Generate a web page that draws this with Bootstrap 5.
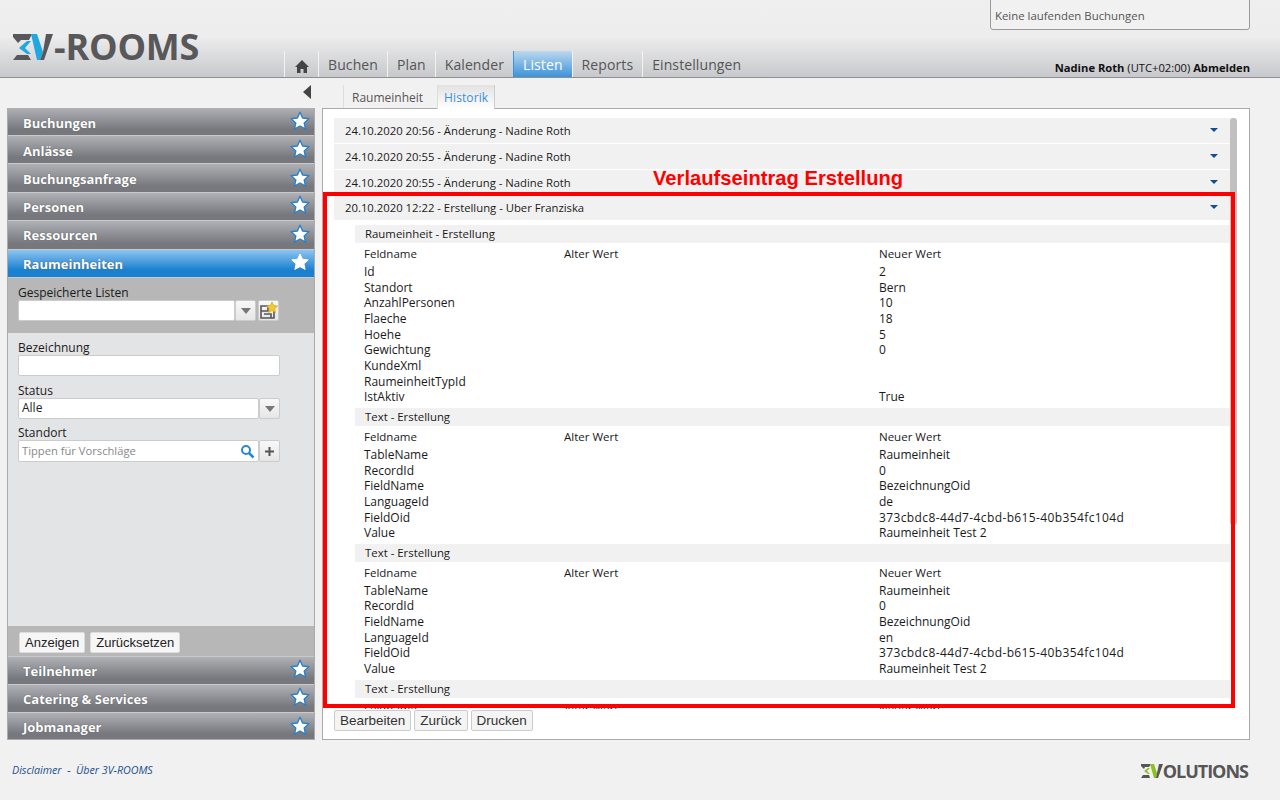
<!DOCTYPE html>
<html lang="de">
<head>
    <meta charset="UTF-8">
    <title>3V-ROOMS</title>
    <link href="https://cdn.jsdelivr.net/npm/bootstrap@5.3.0/dist/css/bootstrap.min.css" rel="stylesheet">
    <style>
        body { background: #f1f1f1; font-family: "Open Sans", "Noto Sans", sans-serif; font-size: 12px; color: #1a1a1a; height: 800px; overflow: hidden; line-height: 15.6px; }

        .top-head { height: 78px; background: linear-gradient(#efeff0 0, #ededee 36px, #c8c9cc 77px); border-bottom: 1px solid #8f8f8f; }
        .logo-wrap { left: 13px; top: 27px; }
        .logo-word { font-size: 36px; font-weight: 700; color: #58585a; line-height: 40px; letter-spacing: -.2px; margin-left: 1px; }
        .booking-box { left: 990px; top: -2px; width: 260px; height: 32px; background: #f1f1f1; border: 1px solid #999; border-radius: 0 0 3px 3px; padding: 9px 4px 0; color: #555; font-size: 11.4px; }
        .main-nav { left: 284px; top: 51px; height: 26px; }
        .main-nav a { display: block; height: 26px; padding: 4px 9px 0; border-left: 1px solid #f2f2f2; font-size: 14px; line-height: 20px; color: #555; text-decoration: none; letter-spacing: .1px; }
        .main-nav a.on { background: linear-gradient(#bcd8ef, #3b93da); color: #fff; border-left-color: #3b93da; }
        .user-line { right: 30px; top: 60px; color: #111; font-size: 11.2px; }

        .page-body { padding: 0 30px 0 7px; }
        .side-col { width: 308px; }
        .collapse-row { height: 30px; padding: 7px 4px 0 0; }
        .side-box { border: 1px solid #aaa; border-top: 0; height: 632px; }
        .side-head { height: 28px; background: linear-gradient(#b0b1b5, #76787e 80%, #76787e); border-bottom: 1px solid #c8c9cc; color: #fff; font-weight: 700; font-size: 13px; padding: 4px 0 0 15px; text-shadow: 0 0 1px #444; flex: none; }
        .side-head.on { background: linear-gradient(#8cc4f0, #1a80d0 75%); }
        .side-head.tall { height: 29px; }
        .side-head.low { padding-top: 2px; }
        .side-head.end { height: 26px; border-bottom: 0; }
        .side-head svg { margin-right: 4px; margin-top: -5px; }
        .saved-block { background: #b7b7b7; height: 55px; padding: 7px 10px 0; flex: none; }
        .filter-block { background: #e3e4e6; min-height: 0; padding: 7px 10px 0; }
        .filter-form { width: 262px; }
        .foot-block { background: #b7b7b7; height: 31px; padding: 6px 11px 0; border-bottom: 1px solid #c8c9cc; gap: 5px; flex: none; }
        .fld-label { display: block; margin: 0; line-height: 15px; }
        .filter-form .fld-label:not(:first-child) { margin-top: 7px; }
        .filter-form .fld-label.near { margin-top: 6px; }
        .fld { height: 21px; background: #fff; border: 1px solid #ccc; border-radius: 2px; padding: 0 3px; font-size: 12px; line-height: 18px; color: #222; }
        .fld-btn { width: 21px; height: 21px; background: linear-gradient(#f8f8f8, #e6e6e6); border: 1px solid #ccc; border-radius: 2px; flex: none; }
        .save-btn { margin-left: 2px; }
        .hint-text { color: #888; font-size: 11.2px; }
        .hint-row .fld, .hint-row .fld-btn { height: 22px; }
        .side-btn { font-family: "Liberation Sans", sans-serif; font-size: 13px; height: 21px; padding: 0 5px; line-height: 19px; background: #f6f6f6; border: 1px solid #ddd; border-radius: 2px; color: #222; }

        .main-col { width: 928px; margin-left: 7px; }
        .sub-tabs { height: 30px; padding: 7px 0 0 21px; }
        .sub-tabs a { display: block; height: 24px; padding: 5px 8px 0; text-decoration: none; color: #555; border-left: 1px solid #ddd; line-height: 15px; }
        .sub-tabs a.on { color: #3a8fd8; background: linear-gradient(#e2e2e2, #fff); border-right: 1px solid #ccc; border-left: 1px solid #ddd; margin-left: 6px; position: relative; z-index: 1; padding: 5px 6px 0; letter-spacing: .1px; }
        .main-box { background: #fff; border: 1px solid #aaa; height: 632px; padding: 9px 0 0 11px; }
        .scroll-area { height: 591px; width: 896px; overflow: hidden; }
        .hist-row { background: #f1f1f1; height: 24.8px; margin-bottom: 1px; padding: 5px 11px 0; font-size: 11.3px; }
        .hist-row i { width: 0; height: 0; border-left: 4.5px solid transparent; border-right: 4.5px solid transparent; border-top: 4px solid #0f4f8f; margin: 5px 1px 0 0; }
        .detail-pane { padding: 4px 0 0 21px; }
        .sect-head { background: #f1f1f1; height: 18px; padding: 1px 10px 0; margin-top: 3px; font-size: 11.4px; }
        .sect-head.first { margin-top: 0; }
        .val-row { height: 15.65px; padding-left: 9px; }
        .val-row.cap { height: 18px; margin-top: 3px; font-size: 11.5px; }
        .val-row span:nth-child(1) { width: 200px; }
        .val-row span:nth-child(2) { width: 315px; }
        .val-row .guid-val { letter-spacing: .38px; }
        .form-btns { margin-top: 1px; gap: 3px; }
        .form-btn { font-family: "Liberation Sans", sans-serif; font-size: 13.5px; height: 21px; padding: 0 5px; line-height: 18px; background: #f4f4f4; border: 1px solid #ccc; border-radius: 2px; color: #333; }
        .scroll-thumb { left: 907px; top: 9px; width: 7px; height: 407px; background: #c0c0c0; border-radius: 3px; }
        .red-frame { left: 0; top: 83px; width: 912px; height: 516px; border: 4px solid #f00; }
        .red-note { left: 330px; top: 56px; font-family: "Liberation Sans", sans-serif; font-weight: 700; font-size: 20.2px; line-height: 26px; color: #f00; white-space: nowrap; }

        .page-foot { padding: 22px 32px 0 12px; }
        .foot-links { font-size: 10.7px; font-style: italic; color: #1b4f8f; }
        .foot-links a { color: inherit; text-decoration: none; }
        .evo-word { font-size: 18px; font-weight: 700; color: #565656; line-height: 18px; letter-spacing: -1px; }
    </style>
</head>
<body>
    <svg width="0" height="0" class="position-absolute">
        <symbol id="star" viewBox="0 0 20 20"><polygon points="10,1.2 12.6,7 18.9,7.7 14.2,11.9 15.5,18.2 10,15 4.5,18.2 5.8,11.9 1.1,7.7 7.4,7" fill="#fff" stroke="#2a80c8" stroke-width="1.4" stroke-linejoin="round"/></symbol>
        <symbol id="starw" viewBox="0 0 20 20"><polygon points="10,2 12.4,7.2 18.2,7.9 13.9,11.8 15.1,17.4 10,14.6 4.9,17.4 6.1,11.8 1.8,7.9 7.6,7.2" fill="#fff" stroke="#fff" stroke-width="1" stroke-linejoin="round"/></symbol>
    </svg>

    <header class="top-head position-relative">
        <div class="logo-wrap position-absolute d-flex align-items-center">
            <svg width="40" height="27" viewBox="0 0 40 27">
                <polygon points="0,0 19,0 16,6 8,6 5,9 0,3" fill="#58585a"/>
                <polygon points="6,14 14,7 18,7 12,14 18,20 14,20" fill="#1fa9e3"/>
                <polygon points="0,26 4,21 15,21 18,26" fill="#58585a"/>
                <polygon points="18,0 24,0 30,18 27,26 24,26" fill="#1fa9e3"/>
                <polygon points="33,0 40,0 31,26 27,26 30,18" fill="#58585a"/>
            </svg>
            <span class="logo-word">-ROOMS</span>
        </div>
        <div class="booking-box position-absolute">Keine laufenden Buchungen</div>
        <nav class="main-nav position-absolute d-flex">
            <a href="#" style="width:34px"><svg width="16" height="15" viewBox="0 0 16 15"><path d="M8 1 L15 8 H13 V14 H9.5 V10 H6.5 V14 H3 V8 H1 Z" fill="#444"/></svg></a>
            <a href="#">Buchen</a>
            <a href="#">Plan</a>
            <a href="#">Kalender</a>
            <a href="#" class="on">Listen</a>
            <a href="#">Reports</a>
            <a href="#">Einstellungen</a>
        </nav>
        <div class="user-line position-absolute"><b>Nadine Roth</b> (UTC+02:00) <b>Abmelden</b></div>
    </header>

    <div class="page-body d-flex">
        <div class="side-col">
            <div class="collapse-row d-flex justify-content-end">
                <svg width="8" height="14" viewBox="0 0 8 14"><polygon points="8,0 8,14 0,7" fill="#444"/></svg>
            </div>
            <div class="side-box d-flex flex-column">
                <div class="side-head d-flex align-items-center justify-content-between">Buchungen<svg width="20" height="20"><use href="#star"/></svg></div>
                <div class="side-head d-flex align-items-center justify-content-between">Anlässe<svg width="20" height="20"><use href="#star"/></svg></div>
                <div class="side-head tall d-flex align-items-center justify-content-between">Buchungsanfrage<svg width="20" height="20"><use href="#star"/></svg></div>
                <div class="side-head low d-flex align-items-center justify-content-between">Personen<svg width="20" height="20"><use href="#star"/></svg></div>
                <div class="side-head tall low d-flex align-items-center justify-content-between">Ressourcen<svg width="20" height="20"><use href="#star"/></svg></div>
                <div class="side-head on low d-flex align-items-center justify-content-between">Raumeinheiten<svg width="20" height="20"><use href="#starw"/></svg></div>
                <div class="saved-block">
                    <label class="fld-label">Gespeicherte Listen</label>
                    <div class="d-flex">
                        <div class="fld" style="width:217px"></div>
                        <div class="fld-btn d-flex align-items-center justify-content-center"><svg width="10" height="6"><polygon points="0,0 10,0 5,6" fill="#777"/></svg></div>
                        <div class="fld-btn save-btn d-flex align-items-center justify-content-center"><svg width="19" height="19" viewBox="0 0 19 19"><path d="M2 5 H9 V10 H2 Z M2 10 V17 H15 V9 M5 13 H12 V17" fill="none" stroke="#555" stroke-width="1.6"/><polygon points="13,1 14.7,4.6 18.6,5 15.7,7.7 16.5,11.5 13,9.6 9.5,11.5 10.3,7.7 7.4,5 11.3,4.6" fill="#f5c92c" stroke="#c99a10" stroke-width=".6"/></svg></div>
                    </div>
                </div>
                <div class="filter-block flex-grow-1">
                    <div class="filter-form">
                        <label class="fld-label">Bezeichnung</label>
                        <div class="fld"></div>
                        <label class="fld-label">Status</label>
                        <div class="d-flex">
                            <div class="fld flex-grow-1">Alle</div>
                            <div class="fld-btn d-flex align-items-center justify-content-center"><svg width="10" height="6"><polygon points="0,0 10,0 5,6" fill="#777"/></svg></div>
                        </div>
                        <label class="fld-label near">Standort</label>
                        <div class="hint-row d-flex">
                            <div class="fld hint-text flex-grow-1 d-flex align-items-center justify-content-between">Tippen für Vorschläge
                                <svg width="15" height="15" viewBox="0 0 15 15"><circle cx="6" cy="6" r="4" fill="none" stroke="#2a86d0" stroke-width="2"/><line x1="9" y1="9" x2="13.5" y2="13.5" stroke="#2a86d0" stroke-width="2.5"/></svg>
                            </div>
                            <div class="fld-btn d-flex align-items-center justify-content-center"><svg width="9" height="9"><path d="M4.5 0 V9 M0 4.5 H9" stroke="#555" stroke-width="2"/></svg></div>
                        </div>
                    </div>
                </div>
                <div class="foot-block d-flex">
                    <button class="btn side-btn" type="button">Anzeigen</button>
                    <button class="btn side-btn" type="button">Zurücksetzen</button>
                </div>
                <div class="side-head low d-flex align-items-center justify-content-between">Teilnehmer<svg width="20" height="20"><use href="#star"/></svg></div>
                <div class="side-head low d-flex align-items-center justify-content-between">Catering &amp; Services<svg width="20" height="20"><use href="#star"/></svg></div>
                <div class="side-head end d-flex align-items-center justify-content-between">Jobmanager<svg width="20" height="20"><use href="#star"/></svg></div>
            </div>
        </div>

        <div class="main-col">
            <div class="sub-tabs d-flex">
                <a href="#">Raumeinheit</a>
                <a href="#" class="on">Historik</a>
            </div>
            <div class="main-box position-relative">
                <div class="scroll-area">
                    <div class="hist-row d-flex justify-content-between">24.10.2020 20:56 - Änderung - Nadine Roth<i></i></div>
                    <div class="hist-row d-flex justify-content-between">24.10.2020 20:55 - Änderung - Nadine Roth<i></i></div>
                    <div class="hist-row d-flex justify-content-between">24.10.2020 20:55 - Änderung - Nadine Roth<i></i></div>
                    <div class="hist-row d-flex justify-content-between">20.10.2020 12:22 - Erstellung - Uber Franziska<i></i></div>
                    <div class="detail-pane">
                        <div class="sect-head first">Raumeinheit - Erstellung</div>
                        <div class="val-row cap d-flex"><span>Feldname</span><span>Alter Wert</span><span>Neuer Wert</span></div>
                        <div class="val-row d-flex"><span>Id</span><span></span><span>2</span></div>
                        <div class="val-row d-flex"><span>Standort</span><span></span><span>Bern</span></div>
                        <div class="val-row d-flex"><span>AnzahlPersonen</span><span></span><span>10</span></div>
                        <div class="val-row d-flex"><span>Flaeche</span><span></span><span>18</span></div>
                        <div class="val-row d-flex"><span>Hoehe</span><span></span><span>5</span></div>
                        <div class="val-row d-flex"><span>Gewichtung</span><span></span><span>0</span></div>
                        <div class="val-row d-flex"><span>KundeXml</span><span></span><span></span></div>
                        <div class="val-row d-flex"><span>RaumeinheitTypId</span><span></span><span></span></div>
                        <div class="val-row d-flex"><span>IstAktiv</span><span></span><span>True</span></div>

                        <div class="sect-head">Text - Erstellung</div>
                        <div class="val-row cap d-flex"><span>Feldname</span><span>Alter Wert</span><span>Neuer Wert</span></div>
                        <div class="val-row d-flex"><span>TableName</span><span></span><span>Raumeinheit</span></div>
                        <div class="val-row d-flex"><span>RecordId</span><span></span><span>0</span></div>
                        <div class="val-row d-flex"><span>FieldName</span><span></span><span>BezeichnungOid</span></div>
                        <div class="val-row d-flex"><span>LanguageId</span><span></span><span>de</span></div>
                        <div class="val-row d-flex"><span>FieldOid</span><span></span><span class="guid-val">373cbdc8-44d7-4cbd-b615-40b354fc104d</span></div>
                        <div class="val-row d-flex"><span>Value</span><span></span><span>Raumeinheit Test 2</span></div>

                        <div class="sect-head">Text - Erstellung</div>
                        <div class="val-row cap d-flex"><span>Feldname</span><span>Alter Wert</span><span>Neuer Wert</span></div>
                        <div class="val-row d-flex"><span>TableName</span><span></span><span>Raumeinheit</span></div>
                        <div class="val-row d-flex"><span>RecordId</span><span></span><span>0</span></div>
                        <div class="val-row d-flex"><span>FieldName</span><span></span><span>BezeichnungOid</span></div>
                        <div class="val-row d-flex"><span>LanguageId</span><span></span><span>en</span></div>
                        <div class="val-row d-flex"><span>FieldOid</span><span></span><span class="guid-val">373cbdc8-44d7-4cbd-b615-40b354fc104d</span></div>
                        <div class="val-row d-flex"><span>Value</span><span></span><span>Raumeinheit Test 2</span></div>

                        <div class="sect-head">Text - Erstellung</div>
                        <div class="val-row cap d-flex"><span>Feldname</span><span>Alter Wert</span><span>Neuer Wert</span></div>
                    </div>
                </div>
                <div class="form-btns d-flex">
                    <button class="btn form-btn" type="button">Bearbeiten</button>
                    <button class="btn form-btn" type="button">Zurück</button>
                    <button class="btn form-btn" type="button">Drucken</button>
                </div>
                <div class="scroll-thumb position-absolute"></div>
                <div class="red-frame position-absolute"></div>
                <div class="red-note position-absolute">Verlaufseintrag Erstellung</div>
            </div>
        </div>
    </div>

    <footer class="page-foot d-flex justify-content-between align-items-center">
        <div class="foot-links"><a href="#">Disclaimer</a> &nbsp;-&nbsp; <a href="#">Über 3V-ROOMS</a></div>
        <div class="d-flex align-items-center">
            <svg width="22" height="14" viewBox="0 0 22 14">
                <polygon points="0,0 10,0 8,3 4,3 3,5 0,2" fill="#565656"/>
                <polygon points="3,7 7,4 9,4 6,7 9,10 7,10" fill="#8cc21f"/>
                <polygon points="0,14 2,11 8,11 9,14" fill="#565656"/>
                <polygon points="9,0 13,0 16,9 15,14 13,14" fill="#8cc21f"/>
                <polygon points="18,0 22,0 17,14 15,14 16,9" fill="#565656"/>
            </svg>
            <span class="evo-word">OLUTIONS</span>
        </div>
    </footer>

    <script src="https://cdn.jsdelivr.net/npm/bootstrap@5.3.0/dist/js/bootstrap.bundle.min.js"></script>
</body>
</html>
